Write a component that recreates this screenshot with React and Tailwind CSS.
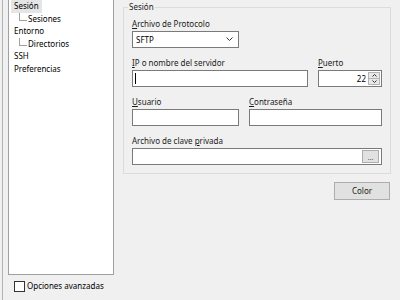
import React from 'react'

const font = { fontFamily: '"Noto Sans", "Liberation Sans", sans-serif' }

function Key({ children }) {
    return <span className="underline underline-offset-[1px]">{children}</span>
}

function Field({ className = '', children }) {
    return (
        <div className={`h-[17px] bg-white border border-[#7a7a7a] flex items-center ${className}`}>
            {children}
        </div>
    )
}

function Label({ children, className = '' }) {
    return <div className={`h-[14px] leading-[15px] text-[#1a1a1a] whitespace-nowrap ${className}`}>{children}</div>
}

function TreeChild({ label }) {
    return (
        <div className="h-[12.5px] flex items-start">
            <div className="ml-[10px] w-[8px] h-[8px] border-l border-b border-[#a0a0a0]"></div>
            <span className="ml-[1px] leading-[12.5px]">{label}</span>
        </div>
    )
}

export default function App() {
    return (
        <div className="w-[400px] h-[300px] bg-[#f0f0f0] flex pl-[2px] overflow-hidden text-[8px] text-black" style={font}>
            {/* panel izquierdo */}
            <div className="w-[112px] shrink-0 border-l border-[#b4b4b4] pl-[5px] flex flex-col">
                <div className="w-[106px] h-[275px] bg-white border-l border-r border-b border-[#a0a0a0] pt-0">
                    <div className="h-[12.5px] pl-[2px] flex items-start">
                        <span className="bg-[#e5e5e5] px-[3px] leading-[12.5px]">Sesión</span>
                    </div>
                    <TreeChild label="Sesiones" />
                    <div className="h-[12.5px] pl-[5px] leading-[12.5px]">Entorno</div>
                    <TreeChild label="Directorios" />
                    <div className="h-[12.5px] pl-[5px] leading-[12.5px]">SSH</div>
                    <div className="h-[12.5px] pl-[5px] leading-[12.5px]">Preferencias</div>
                </div>
                <div className="mt-[5px] ml-[6px] flex items-center gap-[2px]">
                    <div className="w-[11px] h-[11px] bg-white border border-[#333333]"></div>
                    <span className="leading-[12px]">Opciones avanzadas</span>
                </div>
            </div>

            {/* panel derecho */}
            <div className="ml-[9px] w-[268px] flex flex-col">
                <fieldset className="border border-[#dcdcdc] px-[8px] pb-[8px]">
                    <legend className="-ml-[4px] px-[1px] leading-[14px] text-[#1a1a1a]">Sesión</legend>

                    <Label className="mt-[2px]"><Key>A</Key>rchivo de Protocolo</Label>
                    <Field className="mt-[1px] w-[107px] justify-between pl-[3px] pr-[5px]">
                        <span>SFTP</span>
                        <svg width="7" height="5" viewBox="0 0 7 5" fill="none" stroke="#333" strokeWidth="1">
                            <polyline points="0.5,0.5 3.5,3.5 6.5,0.5" />
                        </svg>
                    </Field>

                    <div className="mt-[7px] flex justify-between">
                        <div className="w-[176px]">
                            <Label><Key>I</Key>P o nombre del servidor</Label>
                            <Field className="mt-[1px] w-[176px] pl-[2px]">
                                <div className="w-[1px] h-[11px] bg-black"></div>
                            </Field>
                        </div>
                        <div className="w-[64px]">
                            <Label><Key>P</Key>uerto</Label>
                            <Field className="mt-[1px] w-[64px] justify-end pr-[1px]">
                                <span className="mr-[2px]">22</span>
                                <div className="flex flex-col">
                                    <div className="w-[12px] h-[7px] bg-[#e8e8e8] border border-[#b4b4b4] flex items-center justify-center">
                                        <svg width="5" height="3" viewBox="0 0 5 3" fill="none" stroke="#333" strokeWidth="1">
                                            <polyline points="0.5,2.5 2.5,0.5 4.5,2.5" />
                                        </svg>
                                    </div>
                                    <div className="w-[12px] h-[7px] -mt-[1px] bg-[#e8e8e8] border border-[#b4b4b4] flex items-center justify-center">
                                        <svg width="5" height="3" viewBox="0 0 5 3" fill="none" stroke="#333" strokeWidth="1">
                                            <polyline points="0.5,0.5 2.5,2.5 4.5,0.5" />
                                        </svg>
                                    </div>
                                </div>
                            </Field>
                        </div>
                    </div>

                    <div className="mt-[7px] flex justify-between">
                        <div className="w-[107px]">
                            <Label><Key>U</Key>suario</Label>
                            <Field className="mt-[1px] w-[107px]" />
                        </div>
                        <div className="w-[133px]">
                            <Label><Key>C</Key>ontraseña</Label>
                            <Field className="mt-[1px] w-[133px]" />
                        </div>
                    </div>

                    <Label className="mt-[7px]">Archivo de clave <Key>p</Key>rivada</Label>
                    <Field className="mt-[1px] w-[250px] justify-end pr-[2px]">
                        <div className="w-[17px] h-[13px] bg-[#e1e1e1] border border-[#adadad] flex items-end justify-center text-[7px] leading-[9px] text-[#555]">
                            ...
                        </div>
                    </Field>
                </fieldset>

                <button className="mt-[8px] mr-[1px] self-end w-[56px] h-[18px] bg-[#e1e1e1] border border-[#adadad] text-[#1a1a1a] leading-[16px]">
                    Color
                </button>
            </div>
        </div>
    )
}
